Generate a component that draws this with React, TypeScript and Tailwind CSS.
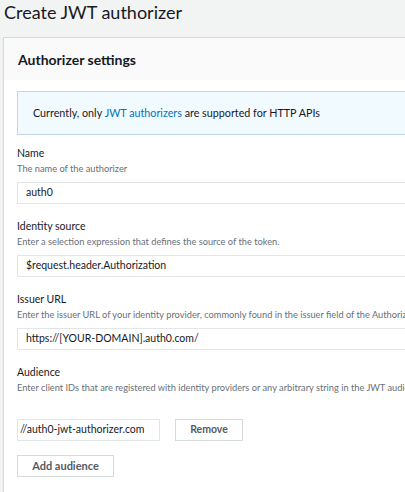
import React from "react";

const font = { fontFamily: 'Lato, "Open Sans", Arial, sans-serif' };

function Field({ label, desc, value }: { label: string; desc: string; value: string }) {
  return (
    <div className="flex flex-col">
      <div className="text-[10.5px] leading-[16px] text-[#16191f] whitespace-nowrap">{label}</div>
      <div className="mt-[1px] text-[9.25px] leading-[14px] text-[#687078] whitespace-nowrap">{desc}</div>
      <div className="mt-[6px] h-[22px] w-[420px] border border-[#e3e6e8] bg-white pl-[8px] flex items-center text-[10.5px] text-[#16191f] whitespace-nowrap">
        {value}
      </div>
    </div>
  );
}

export default function App() {
  return (
    <div className="w-[405px] h-[492px] overflow-hidden bg-[#f2f3f3]" style={font}>
      <div className="pl-[4px] h-[37px] text-[18px] leading-[24px] text-[#16191f] whitespace-nowrap">
        Create JWT authorizer
      </div>
      <div className="ml-[3px] w-[440px] border border-[#d5dbdb] bg-white h-[460px] shadow-[0_1px_1px_rgba(0,28,36,0.15)]">
        <div className="h-[42px] bg-[#fafafa] pl-[14px] flex items-center text-[14px] font-bold text-[#16191f]">
          Authorizer settings
        </div>
        <div className="pl-[13px] pt-[11px]">
          <div className="h-[44px] w-[420px] border border-[#c4d7ea] bg-[#f1faff] pl-[15px] flex items-center text-[10.75px] text-[#16191f] whitespace-nowrap">
            Currently, only&nbsp;<span className="text-[#0073bb]">JWT authorizers</span>&nbsp;are supported for HTTP APIs
          </div>
          <div className="mt-[10px] flex flex-col gap-[14px]">
            <Field label="Name" desc="The name of the authorizer" value="auth0" />
            <Field
              label="Identity source"
              desc="Enter a selection expression that defines the source of the token."
              value="$request.header.Authorization"
            />
            <Field
              label="Issuer URL"
              desc="Enter the issuer URL of your identity provider, commonly found in the issuer field of the Authorization header."
              value="https://[YOUR-DOMAIN].auth0.com/"
            />
            <div className="flex flex-col">
              <div className="text-[10.5px] leading-[16px] text-[#16191f]">Audience</div>
              <div className="mt-[1px] text-[9.25px] leading-[14px] text-[#687078] whitespace-nowrap">
                Enter client IDs that are registered with identity providers or any arbitrary string in the JWT audience field.
              </div>
              <div className="mt-[24px] flex items-center gap-[15px]">
                <div className="h-[22px] w-[143px] border border-[#e3e6e8] bg-white pl-[2px] flex items-center text-[10.5px] text-[#16191f] whitespace-nowrap overflow-hidden">
                  //auth0-jwt-authorizer.com
                </div>
                <button className="h-[22px] w-[68px] border border-[#d5dbdb] bg-white text-[10.5px] font-bold text-[#545b64] flex items-center justify-center">
                  Remove
                </button>
              </div>
              <button className="mt-[14px] h-[22px] w-[97px] border border-[#d5dbdb] bg-white text-[11px] font-bold text-[#545b64] flex items-center justify-center">
                Add audience
              </button>
            </div>
          </div>
        </div>
      </div>
    </div>
  );
}
